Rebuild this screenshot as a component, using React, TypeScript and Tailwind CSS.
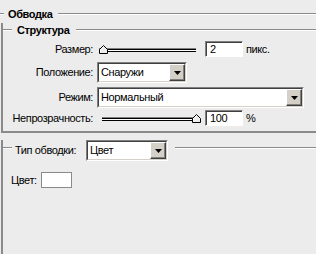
function Line({ className = '' }: { className?: string }) {
  return <div className={`h-[2px] border-t border-t-[#8a8a8a] border-b border-b-white ${className}`} />
}

function Thumb() {
  return (
    <svg width="9" height="9" viewBox="0 0 9 9" className="block">
      <path d="M0.5 8.5 V4.5 L4.5 0.5 L8.5 4.5 V8.5 Z" fill="#ececec" stroke="#000" />
      <path d="M1.5 7.5 V4.9 L4.5 1.9" fill="none" stroke="#fff" />
    </svg>
  )
}

function Slider({ start, end, thumbAt }: { start: number; end: number; thumbAt: 'left' | 'right' }) {
  return (
    <div className="relative h-[9px]" style={{ marginLeft: start, width: end - start }}>
      <div className="absolute left-0 right-0 top-[3px] h-[4px] border-t border-t-[#808080]">
        <div className="h-[3px] border-t border-b border-black bg-white" />
      </div>
      <div className={`absolute top-0 ${thumbAt === 'left' ? 'left-0' : 'right-[-5px]'}`}>
        <Thumb />
      </div>
    </div>
  )
}

function TextBox({ value }: { value: string }) {
  return (
    <div className="w-[38px] h-[16px] border border-t-[#808080] border-l-[#808080] border-b-white border-r-white bg-white shadow-[inset_1px_1px_0_#404040] pl-[4px] leading-[15px]">
      {value}
    </div>
  )
}

function Select({ value, width }: { value: string; width: number }) {
  return (
    <div
      className="h-[21px] flex border border-t-[#808080] border-l-[#808080] border-b-white border-r-white"
      style={{ width }}
    >
      <div className="flex-1 flex border border-t-[#404040] border-l-[#404040] border-b-[#d4d0c8] border-r-[#d4d0c8] bg-white">
        <div className="flex-1 pl-[2px] leading-[17px]">{value}</div>
        <div className="w-[16px] flex items-center justify-center bg-[#d4d0c8] border border-t-white border-l-white border-b-[#404040] border-r-[#404040] shadow-[inset_-1px_-1px_0_#808080]">
          <svg width="7" height="4" viewBox="0 0 7 4">
            <path d="M0 0 H7 L3.5 4 Z" fill="#000" />
          </svg>
        </div>
      </div>
    </div>
  )
}

export default function App() {
  return (
    <div
      className="w-[316px] h-[254px] overflow-hidden bg-[#ececec] text-black text-[11px] tracking-[-0.4px]"
      style={{ fontFamily: '"Liberation Sans", Arial, sans-serif' }}
    >
      <div className="flex items-center h-[14px] mt-[7px]">
        <Line className="w-[4px]" />
        <span className="ml-[4px] font-bold">Обводка</span>
        <Line className="flex-1 ml-[6px]" />
      </div>

      <div className="ml-[1px] mt-[9px] border-l-2 border-b-2 border-[#8a8a8a] pb-[5px]">
        <div className="flex items-center h-[14px] -mt-[7px]">
          <Line className="w-[9px]" />
          <span className="ml-[5px] font-bold">Структура</span>
          <Line className="flex-1 ml-[7px]" />
        </div>

        <div className="flex items-center h-[16px] mt-[4px]">
          <div className="w-[90px] text-right">Размер:</div>
          <Slider start={6} end={103} thumbAt="left" />
          <div className="ml-[9px]">
            <TextBox value="2" />
          </div>
          <span className="ml-[3px]">пикс.</span>
        </div>

        <div className="flex items-center mt-[5px]">
          <div className="w-[90px] text-right">Положение:</div>
          <div className="ml-[4px]">
            <Select value="Снаружи" width={90} />
          </div>
        </div>

        <div className="flex items-center mt-[4px]">
          <div className="w-[90px] text-right">Режим:</div>
          <div className="ml-[4px]">
            <Select value="Нормальный" width={207} />
          </div>
        </div>

        <div className="flex items-center h-[16px] mt-[2px]">
          <div className="w-[90px] text-right">Непрозрачность:</div>
          <Slider start={9} end={103} thumbAt="right" />
          <div className="ml-[9px]">
            <TextBox value="100" />
          </div>
          <span className="ml-[3px]">%</span>
        </div>
      </div>

      <div className="ml-[1px] mt-[15px] border-l-2 border-[#8a8a8a] h-[120px]">
        <div className="flex items-center h-[21px] -mt-[8px]">
          <Line className="w-[9px] self-start mt-[7px]" />
          <span className="ml-[3px] w-[65px]">Тип обводки:</span>
          <div className="ml-[6px]">
            <Select value="Цвет" width={82} />
          </div>
          <Line className="flex-1 ml-[7px] self-start mt-[7px]" />
        </div>

        <div className="flex items-center mt-[11px] pl-[8px]">
          <span className="w-[30px]">Цвет:</span>
          <div className="w-[31px] h-[16px] bg-white border border-[#8a8a8a]" />
        </div>
      </div>
    </div>
  )
}
